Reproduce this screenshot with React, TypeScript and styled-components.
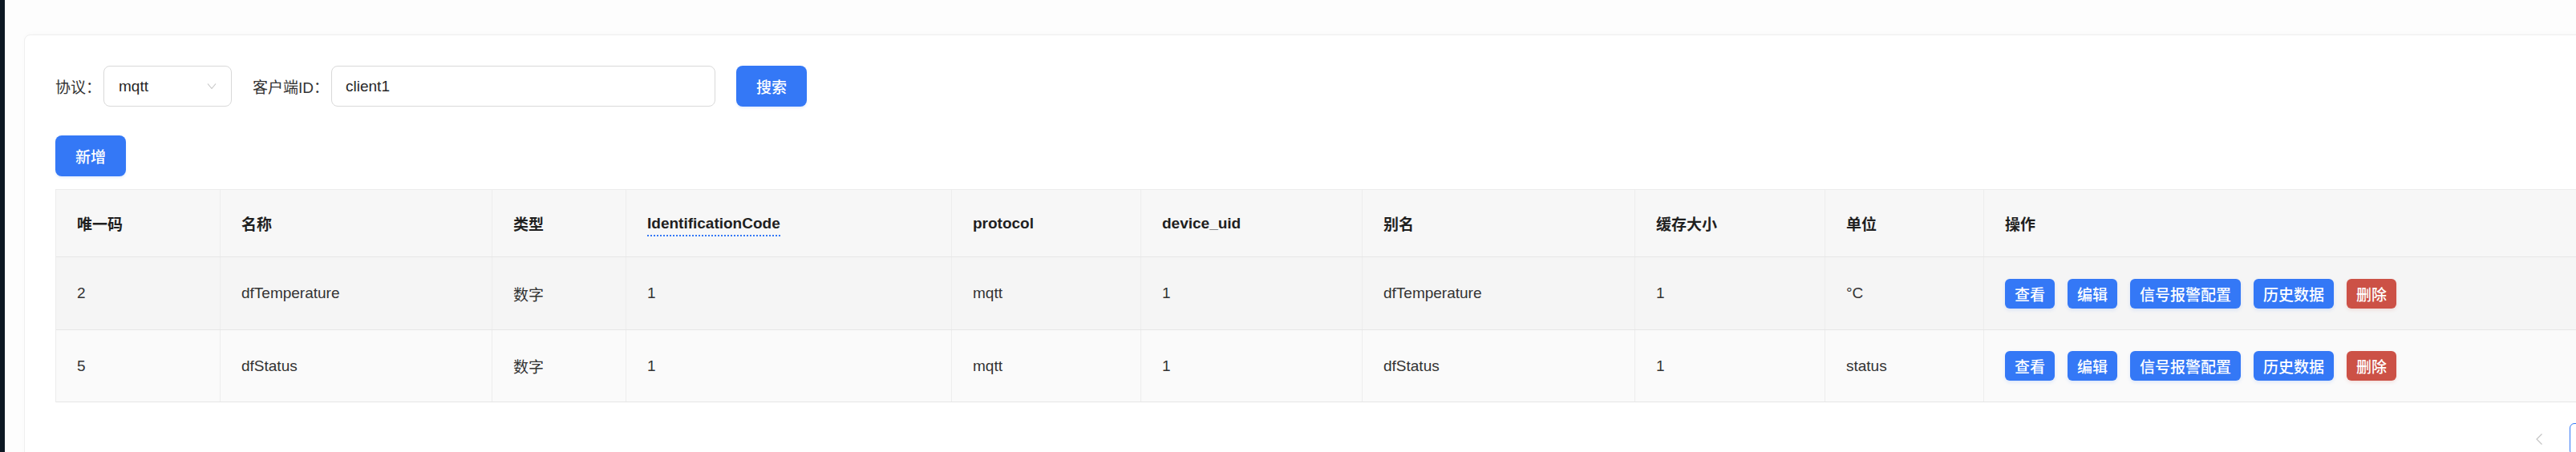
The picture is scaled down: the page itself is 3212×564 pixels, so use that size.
import React from "react";
import styled, { createGlobalStyle } from "styled-components";

const GlobalStyle = createGlobalStyle`
  html, body {
    margin: 0;
    padding: 0;
    overflow: hidden;
    background: #fdfdfd;
    font-family: "Liberation Sans", "Noto Sans CJK SC", sans-serif;
    font-size: 19px;
    color: #333333;
  }
  * {
    box-sizing: border-box;
  }
`;

const COLS = [204, 339, 167, 406, 236, 276, 340, 237, 198];
const GRID = COLS.map((w) => `${w}px`).join(" ") + " 1fr";

const Layout = styled.div`
  display: flex;
  min-height: 564px;
`;

const SideEdge = styled.div`
  width: 6px;
  flex-shrink: 0;
  background: #0d1823;
`;

const Main = styled.main`
  flex: 1;
  padding: 43px 0 0 24px;
`;

const Card = styled.section`
  width: 3307px;
  background: #ffffff;
  border: 1px solid #efefef;
  border-radius: 8px;
  box-shadow: 0 -2px 4px rgba(0, 0, 0, 0.015);
  padding: 38px 38px 40px 38px;
`;

const Toolbar = styled.div`
  display: flex;
  align-items: center;
  height: 51px;
`;

const Field = styled.div`
  display: flex;
  align-items: center;
  gap: 3px;
  margin-right: 26px;
`;

const Label = styled.span`
  color: #333333;
  white-space: nowrap;
`;

const SelectBox = styled.div`
  display: flex;
  align-items: center;
  justify-content: space-between;
  width: 160px;
  height: 51px;
  padding: 0 18px 0 18px;
  border: 1px solid #d9d9d9;
  border-radius: 8px;
  color: #262626;
  background: #ffffff;
`;

const TextInput = styled.input`
  width: 479px;
  height: 51px;
  padding: 0 17px;
  border: 1px solid #d9d9d9;
  border-radius: 8px;
  font: inherit;
  color: #262626;
  outline: none;
  background: #ffffff;
`;

const PrimaryButton = styled.button`
  height: 51px;
  padding: 0 25px;
  border: none;
  border-radius: 8px;
  background: #3478f6;
  color: #ffffff;
  font: inherit;
  font-weight: 500;
  box-shadow: 0 2px 3px rgba(52, 120, 246, 0.12);
  cursor: pointer;
`;

const AddRow = styled.div`
  margin-top: 36px;
  margin-bottom: 16px;
`;

const Table = styled.div`
  border-top: 1px solid #ececec;
  border-left: 1px solid #ececec;
`;

const Row = styled.div<{ $bg: string; $h: number }>`
  display: grid;
  grid-template-columns: ${GRID};
  height: ${(p) => p.$h}px;
  background: ${(p) => p.$bg};
  border-bottom: 1px solid #e6e6e6;
`;

const Cell = styled.div<{ $head?: boolean }>`
  display: flex;
  align-items: center;
  gap: 16px;
  padding: 0 26px;
  white-space: nowrap;
  overflow: hidden;
  font-weight: ${(p) => (p.$head ? 600 : 400)};
  color: ${(p) => (p.$head ? "#1f1f1f" : "#333333")};
  & + & {
    border-left: 1px solid #ededed;
  }
`;

const Hint = styled.span`
  border-bottom: 2px dotted #3478f6;
  padding-bottom: 3px;
  margin-top: 5px;
`;

const ActionButton = styled.button<{ $danger?: boolean }>`
  height: 37px;
  padding: 0 12px;
  border: none;
  border-radius: 6px;
  background: ${(p) => (p.$danger ? "#cc5146" : "#3478f6")};
  color: #ffffff;
  font: inherit;
  font-weight: 500;
  box-shadow: 0 2px 4px
    ${(p) => (p.$danger ? "rgba(204, 81, 70, 0.15)" : "rgba(52, 120, 246, 0.15)")};
  cursor: pointer;
`;

const Pager = styled.div`
  display: flex;
  justify-content: flex-end;
  align-items: center;
  gap: 8px;
  margin-top: 26px;
`;

const PageArrow = styled.span`
  display: flex;
  align-items: center;
  justify-content: center;
  width: 32px;
  height: 40px;
  margin-right: 14px;
  color: #bfbfbf;
`;

const PageItem = styled.span<{ $active?: boolean }>`
  display: flex;
  align-items: center;
  justify-content: center;
  width: 40px;
  height: 40px;
  border: 1px solid ${(p) => (p.$active ? "#3478f6" : "transparent")};
  border-radius: 6px;
  color: ${(p) => (p.$active ? "#3478f6" : "#333333")};
`;

const Chevron = () => (
  <svg width="12" height="9" viewBox="0 0 12 9" fill="none">
    <polyline points="1,1.5 6,7.5 11,1.5" stroke="#c4c4c4" strokeWidth="1.1" />
  </svg>
);

const ArrowLeft = () => (
  <svg width="10" height="16" viewBox="0 0 10 16" fill="none">
    <polyline points="8.5,1.5 2,8 8.5,14.5" stroke="#c4c4c4" strokeWidth="1.2" />
  </svg>
);

const ArrowRight = () => (
  <svg width="10" height="16" viewBox="0 0 10 16" fill="none">
    <polyline points="1.5,1.5 8,8 1.5,14.5" stroke="#c4c4c4" strokeWidth="1.2" />
  </svg>
);

interface Signal {
  id: string;
  name: string;
  type: string;
  code: string;
  protocol: string;
  deviceUid: string;
  alias: string;
  cache: string;
  unit: string;
}

const rows: Signal[] = [
  {
    id: "2",
    name: "dfTemperature",
    type: "数字",
    code: "1",
    protocol: "mqtt",
    deviceUid: "1",
    alias: "dfTemperature",
    cache: "1",
    unit: "°C",
  },
  {
    id: "5",
    name: "dfStatus",
    type: "数字",
    code: "1",
    protocol: "mqtt",
    deviceUid: "1",
    alias: "dfStatus",
    cache: "1",
    unit: "status",
  },
];

const rowBg = ["#f5f5f5", "#fafafa"];

export default function App() {
  return (
    <>
      <GlobalStyle />
      <Layout>
        <SideEdge />
        <Main>
          <Card>
            <Toolbar>
              <Field>
                <Label>协议：</Label>
                <SelectBox>
                  <span>mqtt</span>
                  <Chevron />
                </SelectBox>
              </Field>
              <Field>
                <Label>客户端ID：</Label>
                <TextInput defaultValue="client1" />
              </Field>
              <PrimaryButton>搜索</PrimaryButton>
            </Toolbar>

            <AddRow>
              <PrimaryButton>新增</PrimaryButton>
            </AddRow>

            <Table>
              <Row $bg="#f7f7f7" $h={84}>
                <Cell $head>唯一码</Cell>
                <Cell $head>名称</Cell>
                <Cell $head>类型</Cell>
                <Cell $head>
                  <Hint>IdentificationCode</Hint>
                </Cell>
                <Cell $head>protocol</Cell>
                <Cell $head>device_uid</Cell>
                <Cell $head>别名</Cell>
                <Cell $head>缓存大小</Cell>
                <Cell $head>单位</Cell>
                <Cell $head>操作</Cell>
              </Row>
              {rows.map((r, i) => (
                <Row key={r.id} $bg={rowBg[i % 2]} $h={91 - i}>
                  <Cell>{r.id}</Cell>
                  <Cell>{r.name}</Cell>
                  <Cell>{r.type}</Cell>
                  <Cell>{r.code}</Cell>
                  <Cell>{r.protocol}</Cell>
                  <Cell>{r.deviceUid}</Cell>
                  <Cell>{r.alias}</Cell>
                  <Cell>{r.cache}</Cell>
                  <Cell>{r.unit}</Cell>
                  <Cell>
                    <ActionButton>查看</ActionButton>
                    <ActionButton>编辑</ActionButton>
                    <ActionButton>信号报警配置</ActionButton>
                    <ActionButton>历史数据</ActionButton>
                    <ActionButton $danger>删除</ActionButton>
                  </Cell>
                </Row>
              ))}
            </Table>

            <Pager>
              <PageArrow>
                <ArrowLeft />
              </PageArrow>
              <PageItem $active>1</PageItem>
              <PageArrow>
                <ArrowRight />
              </PageArrow>
            </Pager>
          </Card>
        </Main>
      </Layout>
    </>
  );
}
